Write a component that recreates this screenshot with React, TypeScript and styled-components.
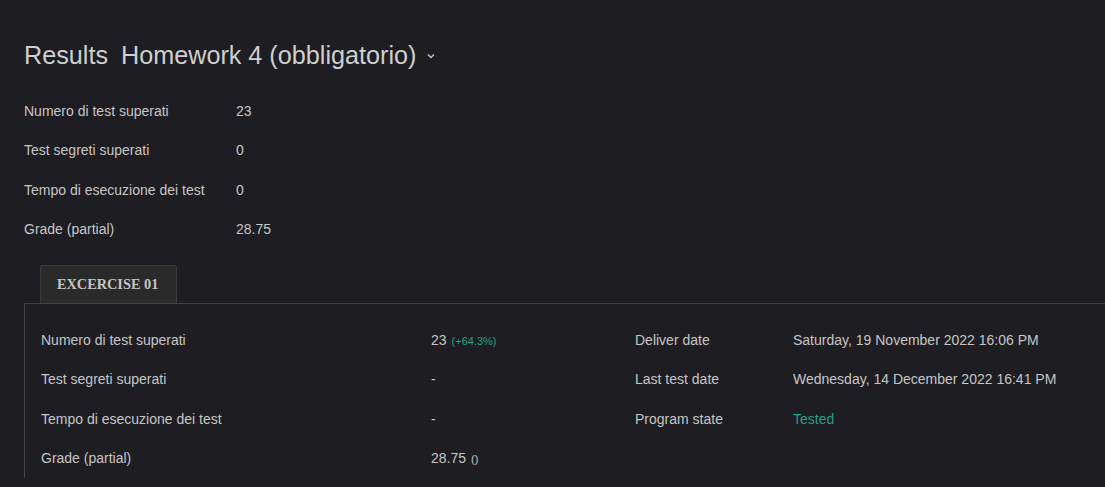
import React from "react";
import styled, { createGlobalStyle } from "styled-components";

const Global = createGlobalStyle`
  html, body { margin: 0; padding: 0; background: #1e1d22; overflow: hidden; }
  body { font-family: "Liberation Sans", Arial, sans-serif; color: #c6c6c6; }
`;

const Page = styled.div`
  padding: 40px 0 0 24px;
`;

const Title = styled.h1`
  margin: 0;
  display: flex;
  align-items: center;
  height: 30px;
  font-size: 25.2px;
  font-weight: 400;
  color: #cfcfcf;
  gap: 13px;
`;

const Chevron = styled.svg`
  width: 10px;
  height: 10px;
  margin-left: -3px;
  margin-top: 2px;
`;

const Summary = styled.div`
  display: grid;
  grid-template-columns: 212px auto;
  grid-auto-rows: 39.5px;
  align-items: center;
  margin-top: 21px;
  font-size: 14px;
`;

const Cell = styled.div<{ $accent?: boolean }>`
  color: ${(p) => (p.$accent ? "#1fa386" : "#c6c6c6")};
  white-space: nowrap;
`;

const Small = styled.span<{ $accent?: boolean }>`
  font-size: 11px;
  margin-left: 5px;
  color: ${(p) => (p.$accent ? "#1fa386" : "#c6c6c6")};
`;

const Tabs = styled.div`
  display: flex;
  margin-top: 16px;
  padding-left: 16px;
`;

const Tab = styled.div`
  height: 37px;
  padding: 0 18px 0 16px;
  display: flex;
  align-items: center;
  background: #2a2a2a;
  border: 1px solid #3b3b3d;
  border-bottom: none;
  border-radius: 3px 3px 0 0;
  font-family: "Liberation Serif", "Times New Roman", serif;
  font-weight: 700;
  font-size: 14.3px;
  color: #c4c4c4;
`;

const Panel = styled.div`
  border-top: 1px solid #444446;
  border-left: 1px solid #444446;
  padding: 16px 0 0 16px;
  display: grid;
  grid-template-columns: 390px 204px 158px auto;
  grid-auto-rows: 39.5px;
  align-items: center;
  font-size: 14px;
`;

const summary: [string, string][] = [
  ["Numero di test superati", "23"],
  ["Test segreti superati", "0"],
  ["Tempo di esecuzione dei test", "0"],
  ["Grade (partial)", "28.75"],
];

export default function App() {
  return (
    <>
      <Global />
      <Page>
        <Title>
          <span>Results</span>
          <span>Homework 4 (obbligatorio)</span>
          <Chevron viewBox="0 0 10 10">
            <path d="M2 3.5 L5 6.5 L8 3.5" fill="none" stroke="#c6c6c6" strokeWidth="1.4" />
          </Chevron>
        </Title>
        <Summary>
          {summary.map(([k, v]) => (
            <React.Fragment key={k}>
              <Cell>{k}</Cell>
              <Cell>{v}</Cell>
            </React.Fragment>
          ))}
        </Summary>
        <Tabs>
          <Tab>EXCERCISE 01</Tab>
        </Tabs>
        <Panel>
          <Cell>Numero di test superati</Cell>
          <Cell>
            23<Small $accent>(+64.3%)</Small>
          </Cell>
          <Cell>Deliver date</Cell>
          <Cell>Saturday, 19 November 2022 16:06 PM</Cell>

          <Cell>Test segreti superati</Cell>
          <Cell>-</Cell>
          <Cell>Last test date</Cell>
          <Cell>Wednesday, 14 December 2022 16:41 PM</Cell>

          <Cell>Tempo di esecuzione dei test</Cell>
          <Cell>-</Cell>
          <Cell>Program state</Cell>
          <Cell $accent>Tested</Cell>

          <Cell>Grade (partial)</Cell>
          <Cell>
            28.75<Small>()</Small>
          </Cell>
          <Cell />
          <Cell />
        </Panel>
      </Page>
    </>
  );
}
